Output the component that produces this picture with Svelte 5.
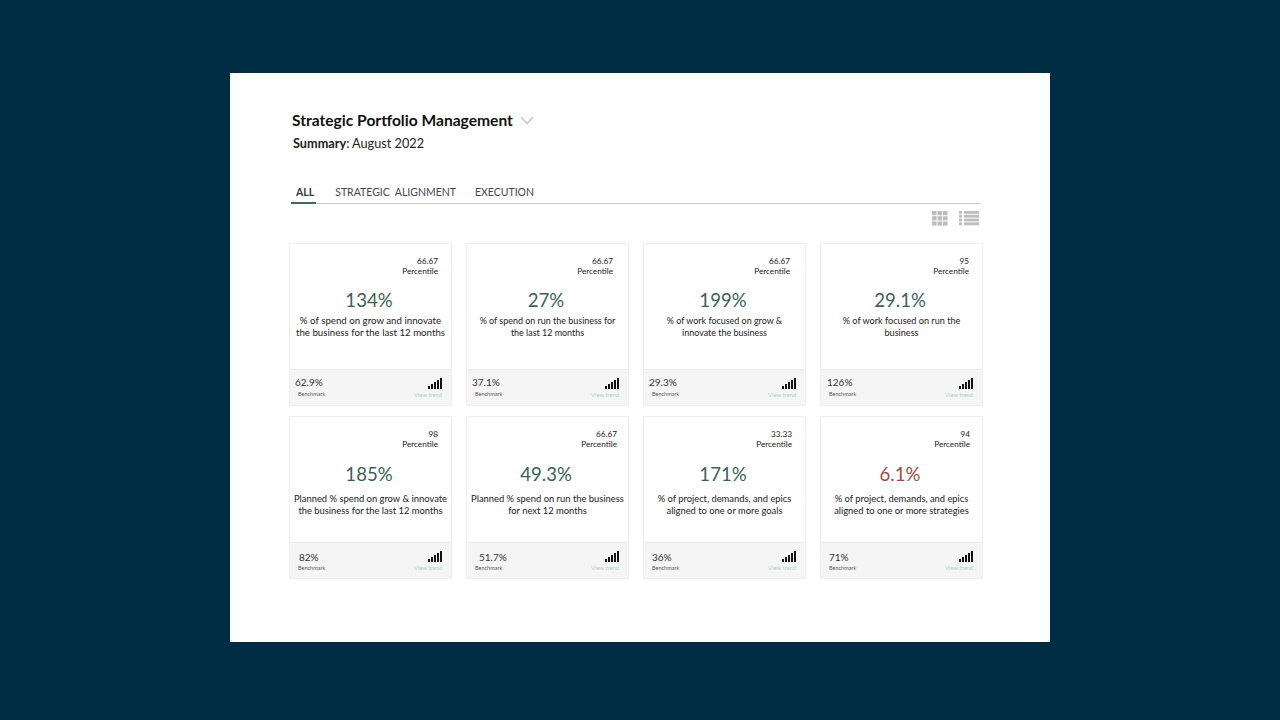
<script>
    const cards = [
        { pct: '66.67', pctRight: 14, value: '134%', text: '% of spend on grow and innovate\nthe business for the last 12 months', size: 9.7, bench: '62.9%', shift: 0 },
        { pct: '66.67', pctRight: 16, value: '27%', text: '% of spend on run the business for\nthe last 12 months', size: 8.95, bench: '37.1%', shift: 0 },
        { pct: '66.67', pctRight: 16, value: '199%', text: '% of work focused on grow &\ninnovate the business', size: 8.95, bench: '29.3%', shift: 0 },
        { pct: '95', pctRight: 14, value: '29.1%', text: '% of work focused on run the\nbusiness', size: 9.1, bench: '126%', shift: 1 },
        { pct: '98', pctRight: 14, value: '185%', text: 'Planned % spend on grow & innovate\nthe business for the last 12 months', size: 9.4, bench: '82%', shift: 4 },
        { pct: '66.67', pctRight: 12, value: '49.3%', text: 'Planned % spend on run the business\nfor next 12 months', size: 9.4, bench: '51.7%', shift: 7 },
        { pct: '33.33', pctRight: 14, value: '171%', text: '% of project, demands, and epics\naligned to one or more goals', size: 9.35, bench: '36%', shift: 3 },
        { pct: '94', pctRight: 13, value: '6.1%', text: '% of project, demands, and epics\naligned to one or more strategies', size: 9.35, bench: '71%', shift: 3, bad: true },
    ];
    const bars = [3, 5, 7, 9, 11];
</script>

<main class="panel">
    <header class="head">
        <h1>
            Strategic Portfolio Management
            <svg class="chevron" width="14" height="9" viewBox="0 0 14 9" fill="none">
                <path d="M1 1l6 6.5L13 1" stroke="#c4c8ca" stroke-width="1.6" />
            </svg>
        </h1>
        <p class="summary"><b>Summary</b>: August 2022</p>
    </header>

    <nav class="tabs">
        <span class="tab active">ALL</span>
        <span class="tab">STRATEGIC&nbsp; ALIGNMENT</span>
        <span class="tab">EXECUTION</span>
    </nav>

    <div class="views">
        <svg width="16" height="15" viewBox="0 0 16 15" fill="#bdbdbd">
            {#each [0, 5.5, 11] as x}
                {#each [0, 5.2, 10.4] as y}
                    <rect {x} {y} width="4.6" height="4.2" />
                {/each}
            {/each}
        </svg>
        <svg width="20" height="15" viewBox="0 0 20 15" fill="#bdbdbd">
            {#each [0, 3.8, 7.6, 11.4] as y}
                <rect x="0" {y} width="3" height="2.8" />
                <rect x="5" {y} width="15" height="2.8" />
            {/each}
        </svg>
    </div>

    <section class="grid">
        {#each cards as card}
            <article class="card">
                <div class="body">
                    <div class="percentile" style="padding-right: {card.pctRight - 1}px">{card.pct}<br />Percentile</div>
                    <div class="value" class:bad={card.bad}>{card.value}</div>
                    <p class="desc" style="font-size: {card.size}px">{card.text}</p>
                </div>
                <footer class="foot">
                    <div class="bench">
                        <div class="bench-value" style="margin-left: {card.shift}px">{card.bench}</div>
                        <div class="bench-label">Benchmark</div>
                    </div>
                    <div class="trend">
                        <svg width="14" height="11" viewBox="0 0 14 11" fill="#111">
                            {#each bars as h, i}
                                <rect x={i * 3} y={11 - h} width="2" height={h} />
                            {/each}
                        </svg>
                        <span>View trend</span>
                    </div>
                </footer>
            </article>
        {/each}
    </section>
</main>

<style>
    :global(body) {
        background: #002d43;
        font-family: Lato, 'Liberation Sans', sans-serif;
    }

    .panel {
        box-sizing: border-box;
        width: 820px;
        height: 569px;
        margin: 73px 0 0 230px;
        padding: 36px 69px 0 59px;
        background: #fff;
        color: #1c1c1c;
    }

    .head {
        padding-left: 3px;
    }

    h1 {
        display: flex;
        align-items: center;
        gap: 7px;
        margin: 0;
        font-size: 15.6px;
        line-height: 22px;
        font-weight: 700;
        color: #111;
    }

    .summary {
        margin: 2px 0 0 1px;
        font-size: 12.7px;
        line-height: 20px;
        color: #222;
    }

    .tabs {
        display: flex;
        gap: 19px;
        margin: 31px 0 0 2px;
        border-bottom: 1px solid #c9cdcd;
    }

    .tab {
        padding: 0 0 1px;
        font-size: 10.5px;
        line-height: 17px;
        color: #3f4a4f;
    }

    .active {
        margin-bottom: -1px;
        padding: 0 2px 1px 5px;
        border-bottom: 2px solid #3d6b5c;
        font-weight: 700;
        color: #2f3a3e;
    }

    .views {
        display: flex;
        justify-content: flex-end;
        gap: 11px;
        height: 15px;
        margin: 7px 2px 0 0;
    }

    .grid {
        display: grid;
        grid-template-columns: repeat(4, 163px);
        column-gap: 14px;
        row-gap: 10px;
        margin: 17px -2px 0 0;
    }

    .card {
        display: flex;
        flex-direction: column;
        box-sizing: border-box;
        height: 163px;
        border: 1px solid #efefef;
    }

    .body {
        flex: 1;
        padding-top: 12px;
        text-align: center;
    }

    .percentile {
        font-size: 8.2px;
        line-height: 10px;
        text-align: right;
        color: #222;
    }

    .value {
        margin: 11px 3px 0 0;
        font-size: 18.6px;
        line-height: 26px;
        color: #3a6258;
    }

    .bad {
        color: #a24a45;
    }

    .desc {
        margin: 2px 0 0;
        line-height: 11.5px;
        white-space: pre-line;
        color: #222;
    }

    .card:nth-child(n + 5) .value {
        margin-top: 12px;
    }

    .card:nth-child(n + 5) .desc {
        margin-top: 6px;
    }

    .foot {
        display: flex;
        justify-content: space-between;
        height: 36px;
        box-sizing: border-box;
        padding: 5px 9px 0 5px;
        background: #f5f5f5;
        border-top: 1px solid #ebebeb;
    }

    .bench-value {
        font-size: 10px;
        line-height: 14px;
        color: #333;
    }

    .bench-label {
        margin: 1px 0 0 3px;
        font-size: 5.5px;
        line-height: 8px;
        color: #555;
    }

    .card:nth-child(n + 5) .bench-value {
        margin-top: 2px;
    }

    .card:nth-child(n + 5) .bench-label {
        margin-top: 0;
    }

    .trend {
        display: flex;
        flex-direction: column;
        align-items: flex-end;
        gap: 2px;
        padding-top: 3px;
    }

    .trend svg {
        display: block;
    }

    .trend span {
        font-size: 5.8px;
        line-height: 8px;
        color: #a9d3c6;
    }
</style>
